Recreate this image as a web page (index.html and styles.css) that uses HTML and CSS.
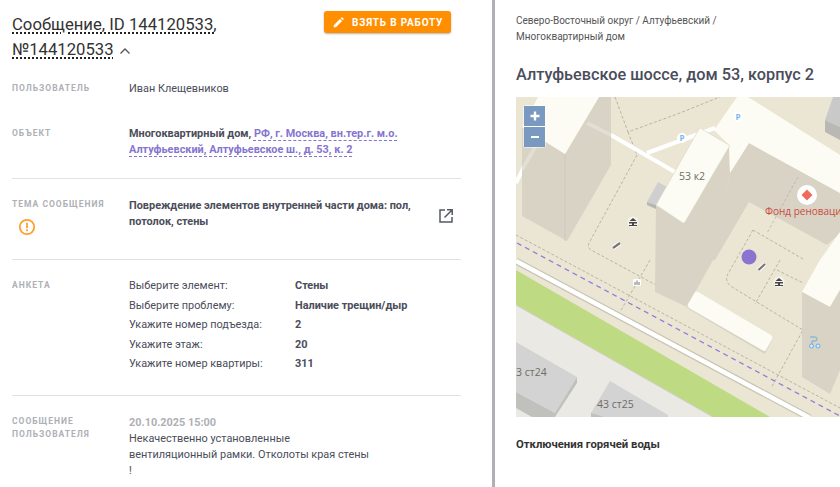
FILE: index.html
```html
<!DOCTYPE html>
<html lang="ru">
<head>
<meta charset="utf-8">
<title>Сообщение</title>
<link rel="stylesheet" href="styles.css">
</head>
<body>
<div class="page">
  <section class="left">
    <header class="head">
      <h1 class="title"><span class="dotted">Сообщение, ID 144120533, №144120533</span> <svg class="chev" viewBox="0 0 12 8" width="12" height="8"><path d="M1.5 6.5 6 2l4.5 4.5" fill="none" stroke="#555" stroke-width="1.3"/></svg></h1>
      <button class="take"><svg viewBox="0 0 12 12" width="11" height="11"><path d="M0.8 11.2V8.9L7.6 2.1l2.3 2.3-6.8 6.8zM8.4 1.3l.8-.7a.8.8 0 0 1 1.1 0l1.1 1.1a.8.8 0 0 1 0 1.1l-.8.8z" fill="#fff"/></svg>Взять в работу</button>
    </header>
    <div class="row r-user">
      <div class="label">Пользователь</div>
      <div class="value">Иван Клещевников</div>
    </div>
    <div class="row r-obj">
      <div class="label">Объект</div>
      <div class="value obj"><b>Многоквартирный дом, </b><a class="addr">РФ, г. Москва, вн.тер.г. м.о. Алтуфьевский, Алтуфьевское ш., д. 53, к. 2</a></div>
    </div>
    <div class="row r-theme">
      <div class="label">Тема сообщения
        <svg class="warn" viewBox="0 0 18 18" width="18" height="18"><circle cx="9" cy="9" r="7.2" fill="none" stroke="#ff9f2e" stroke-width="1.8"/><rect x="8.1" y="4.8" width="1.8" height="5.4" fill="#ff9f2e"/><rect x="8.1" y="11.3" width="1.8" height="1.8" fill="#ff9f2e"/></svg>
      </div>
      <div class="value theme"><b>Повреждение элементов внутренней части дома: пол, потолок, стены</b></div>
      <svg class="ext" viewBox="0 0 16 16" width="16" height="16"><path d="M7 2H2v12h12V9" fill="none" stroke="#555962" stroke-width="1.5"/><path d="M6.5 9.5 14 2M9 1.8h5.2V7" fill="none" stroke="#555962" stroke-width="1.5"/></svg>
    </div>
    <div class="row r-form">
      <div class="label">Анкета</div>
      <dl class="form">
        <dt>Выберите элемент:</dt><dd>Стены</dd>
        <dt>Выберите проблему:</dt><dd>Наличие трещин/дыр</dd>
        <dt>Укажите номер подъезда:</dt><dd>2</dd>
        <dt>Укажите этаж:</dt><dd>20</dd>
        <dt>Укажите номер квартиры:</dt><dd>311</dd>
      </dl>
    </div>
    <div class="row r-msg">
      <div class="label">Сообщение пользователя</div>
      <div class="value msg">
        <div class="date">20.10.2025 15:00</div>
        <div>Некачественно установленные</div>
        <div>вентиляционный рамки. Отколоты края стены</div>
        <div>!</div>
      </div>
    </div>
  </section>
  <div class="divider"></div>
  <section class="right">
    <div class="crumbs">Северо-Восточный округ / Алтуфьевский /<br>Многоквартирный дом</div>
    <h2 class="addr-title">Алтуфьевское шоссе, дом 53, корпус 2</h2>
    <div class="map">
      <svg class="map-svg" viewBox="516 97 324 320" width="324" height="320">
        <rect x="516" y="97" width="324" height="320" fill="#ebe6d4"/>
        <g fill="none" stroke="#a9a796" stroke-width=".8" stroke-dasharray="3 2">
          <path d="M516 235 840 408"/>
          <path d="M615 97 628 132 680 113 737 90"/>
          <path d="M637 155 589 243q-2 4 2 7L656 285"/>
          <path d="M628 132 637 155"/>
          <path d="M753 230 729 272q-6 9 3 15L803 330 771 388"/>
          <path d="M753 230 803 259"/>
          <path d="M780 260 755 304"/>
          <path d="M777 270 803 283"/>
          <path d="M650 260 620 312"/>
        </g>
        <path d="M516 261 810 418" stroke="#c9c5b4" stroke-width="7" fill="none"/>
        <path d="M516 261 810 418" stroke="#fff" stroke-width="4.5" fill="none"/>
        <path d="M516 270 770 417H713L516 305z" fill="#bedb84"/>
        <path d="M516 305 713 417H516z" fill="#eae9e3"/>
        <path d="M516 305 713 417" stroke="#cfcdc3" fill="none"/>
        <path d="M517 243 840 416" stroke="#8f7dd8" stroke-width="1.3" stroke-dasharray="5 4" fill="none"/>
        <path d="M611 135 675 172M647 153 715 128M516 183 524 167" stroke="#fff" stroke-width="4" fill="none"/>
        <path d="M522 127 565 154 599 97H611V165L567 241 522 216z" fill="#d8d3c5"/>
        <path d="M565 154V241" stroke="#cfcabb"/>
        <path d="M587 123 611 135M522 170 543 133" stroke="#fff" stroke-opacity=".25" stroke-width="4" fill="none"/>
        <path d="M538 97H599L565 154 522 127z" fill="#fdfcf4"/>
        <path d="M658 182 667 187 656 205 647 202z" fill="#cfcfd0"/>
        <path d="M647 202V205L656 209 656 205z" fill="#b7b6b0"/>
        <path d="M656 205 684 223 729 145 730 173 713 260 687 307 655 292z" fill="#d8d3c5"/>
        <path d="M749 143 840 193V233L827 245 749 202 715 260H712L730 173z" fill="#d8d3c5"/>
        <path d="M798 177 767 233" fill="none" stroke="#a9a796" stroke-width=".6" stroke-dasharray="3 2"/>
        <path d="M737 97H748L840 155V193L749 143 730 173 729 145 714 130z" fill="#fdfcf4"/>
        <path d="M700 128 729 145Q730 146 729 147L685 222Q684 223 683 223L656 205 699 129Q699 128 700 128z" fill="#fdfcf4" stroke="#d9d4c2" stroke-width=".6"/>
        <path d="M820 260 840 232V290L830 307 802 292z" fill="#fdfcf4"/>
        <path d="M802 292 830 307 840 290V370L830 394 802 377z" fill="#d8d3c5"/>
        <path d="M687 308 695 295 772 340 765 354z" fill="#d8d3c5"/>
        <path d="M695 292Q696 291 698 292L771 335Q773 337 772 339L766 350Q765 352 762 350L689 308Q687 306 688 304z" fill="#fdfcf4"/>
        <path d="M833 97H840V127L825 120z" fill="#c9c9c9"/>
        <path d="M825 120 840 127V140L825 132z" fill="#b9b8b4"/>
        <path d="M516 342 577 377 555 413 516 392z" fill="#d3d3d3"/>
        <path d="M577 377V383L555 417V413z" fill="#c0c0bd"/>
        <path d="M516 392 555 413V417H532L516 408z" fill="#c0c0bd"/>
        <path d="M610 381 668 415V417H591V413z" fill="#d3d3d3"/>
        <path d="M591 413 604 417H591z" fill="#c0c0bd"/>
        <text class="m-label" x="692" y="180" text-anchor="middle">53 к2</text>
        <text class="m-label" x="516" y="376">3 ст24</text>
        <text class="m-label" x="597" y="408">43 ст25</text>
        <circle cx="682" cy="138" r="5" fill="#fff"/><text class="m-p" x="682" y="141" text-anchor="middle">P</text>
        <circle cx="738" cy="117" r="5" fill="#fff"/><text class="m-p" x="738" y="120" text-anchor="middle">P</text>
        <circle cx="807" cy="195" r="10" fill="#fff"/>
        <path d="M807 189.500 812.500 195 807 200.500 801.500 195z" fill="#f0695a"/>
        <text class="m-poi" x="765" y="215">Фонд реновации</text>
        <circle cx="749" cy="257" r="7.500" fill="#8a74d0"/>
        <circle cx="633" cy="222" r="5.500" fill="#f6f4ea"/>
        <circle cx="779" cy="282" r="5.500" fill="#f6f4ea"/>
        <g fill="#44444a">
          <path d="M633 218 636.500 221H629.500zM629 222H637V223.500H629zM632 223.500H634V225.500H632zM629 225H637V226H629z"/>
          <path d="M779 278 782.500 281H775.500zM775 282H783V283.500H775zM778 283.500H780V285.500H778zM775 285H783V286H775z"/>
        </g>
        <path d="M613 248 620 243M758.500 270 765 264" stroke="#fff" stroke-width="4"/>
        <path d="M613 248 620 243M758.500 270 765 264" stroke="#777" stroke-width="2.200"/>
        <rect x="633" y="279" width="8" height="7" rx="1.500" fill="#fff"/><path d="M635 285V282M637 285V280.500M639 285V282" stroke="#666" stroke-width=".9"/>
        <g fill="#d9ecfb" stroke="#67aee6" stroke-width="1">
          <path d="M810 337h5q2 0 2 2t-2 2h-3v4" fill="none"/>
          <circle cx="811.500" cy="346" r="2"/><circle cx="818" cy="346" r="2"/>
        </g>
      </svg>
      <div class="zoom-ctl">
        <button class="zbtn"><svg viewBox="0 0 10 10" width="10" height="10"><path d="M5 .5v9M.5 5h9" stroke="#fff" stroke-width="2.400"/></svg></button>
        <button class="zbtn"><svg viewBox="0 0 10 10" width="10" height="10"><path d="M1 5h8" stroke="#fff" stroke-width="2"/></svg></button>
      </div>
    </div>
    <h3 class="outages">Отключения горячей воды</h3>
  </section>
</div>
</body>
</html>
```

FILE: styles.css
```css
* { box-sizing: border-box; }
html, body { margin: 0; padding: 0; height: 100%; overflow: hidden; background: #fff; }
body { font-family: Roboto, "Liberation Sans", sans-serif; color: #4a4d5a; font-size: 10.9px; }
.page { display: flex; width: 840px; height: 487px; overflow: hidden; }
.left { width: 492px; flex: none; padding: 0 31px 0 12px; }
.divider { width: 3px; flex: none; background: #b1b0b6; }
.right { flex: 1; min-width: 0; padding: 13px 0 0 21px; }

.head { display: flex; justify-content: space-between; align-items: flex-start; padding-top: 12px; height: 63px; }
.title { margin: 0; width: 225px; font-size: 16.7px; line-height: 25px; font-weight: 400; color: #333; }
.dotted { text-decoration: underline dotted #222 1.5px; text-underline-offset: 2px; }
.chev { vertical-align: 0; margin-left: 1px; }
.take { display: flex; align-items: center; gap: 8px; width: 127px; height: 22px; margin: -1px 10px 0 0; padding: 0 0 0 9px; border: 0; border-radius: 3px; background: #ff8f00; color: #fff; font: 700 10px Roboto, sans-serif; letter-spacing: .8px; text-transform: uppercase; box-shadow: 0 1px 2px rgba(0,0,0,.3); white-space: nowrap; }

.row { display: flex; }
.label { width: 117px; flex: none; font-size: 8.5px; line-height: 13px; font-weight: 700; letter-spacing: 1px; text-transform: uppercase; color: #aeb0b6; }
.value { line-height: 16px; color: #4a4d5a; }
.value b, dd { font-weight: 700; }
.addr { color: #8675cf; font-weight: 700; text-decoration: underline dashed #8675cf 1px; text-underline-offset: 3px; }
.r-user { padding: 18px 0 29px; }
.r-user .label { line-height: 14px; }
.r-obj { padding-bottom: 20px; border-bottom: 1px solid #e2e2e2; }
.r-obj .label { padding-top: 1px; }
.obj { width: 290px; }
.r-theme { padding: 19px 0 23px; border-bottom: 1px solid #e2e2e2; }
.theme { width: 295px; }
.warn { display: block; margin: 7px 0 0 6px; }
.ext { margin: 10px 0 0 14px; flex: none; }
.r-form { padding: 16px 0 21px; border-bottom: 1px solid #e2e2e2; }
.r-form .label { padding-top: 3px; }
.form { display: grid; grid-template-columns: 166px auto; grid-auto-rows: 19.5px; align-items: center; margin: 0; }
.form dt, .form dd { margin: 0; }
.r-msg { padding-top: 19px; }
.msg { width: 245px; }
.date { color: #aeb0b6; font-weight: 700; }

.crumbs { font-size: 10px; line-height: 16px; color: #555; }
.addr-title { margin: 20px 0 12px; font-size: 16.3px; line-height: 20px; font-weight: 500; color: #4a4d5a; white-space: nowrap; }
.map { position: relative; width: 324px; height: 320px; }
.map-svg { display: block; }
.m-label { font: 10.5px "Open Sans", sans-serif; fill: #6e6c66; }
.m-poi { font: 10px "Open Sans", sans-serif; fill: #cc4b3f; }
.m-p { font: 700 8px "Open Sans", sans-serif; fill: #7db7ea; }
.zoom-ctl { position: absolute; left: 7px; top: 8px; display: flex; flex-direction: column; gap: 1px; padding: 1px; background: rgba(255,255,255,.5); border-radius: 3px; }
.zbtn { display: flex; align-items: center; justify-content: center; width: 21px; height: 20px; padding: 0; border: 0; background: #7a99c0; }
.outages { margin: 21px 0 0; font-size: 11.3px; line-height: 14px; font-weight: 700; color: #333; }
```
